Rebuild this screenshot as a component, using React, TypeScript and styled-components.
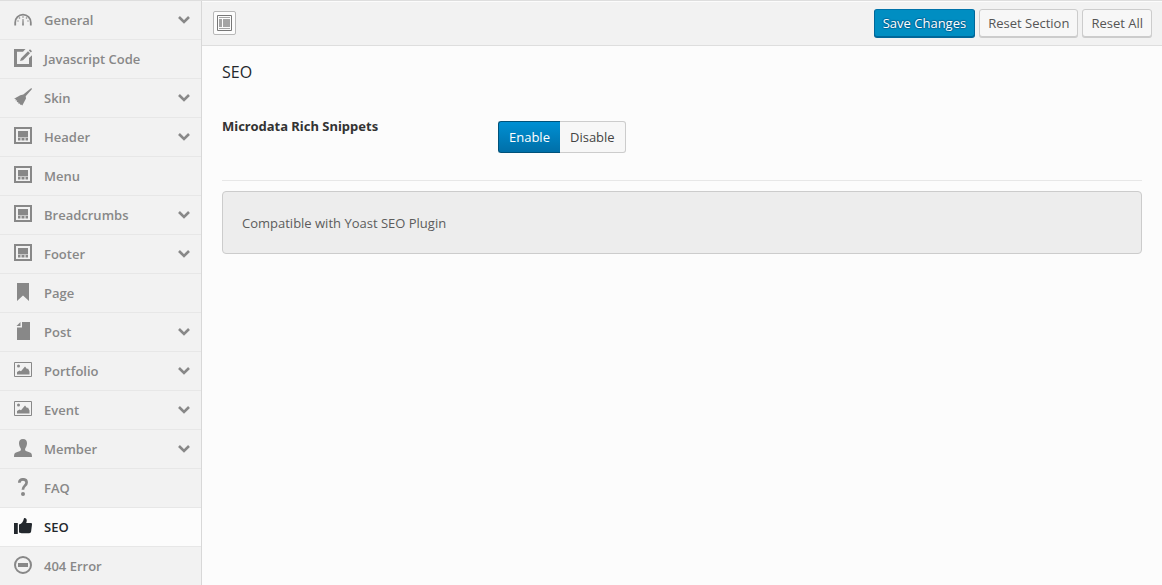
import React, { useState } from 'react';
import styled, { createGlobalStyle, css } from 'styled-components';

const GlobalStyle = createGlobalStyle`
  *, *::before, *::after { box-sizing: border-box; }
  body {
    margin: 0;
    background: #fcfcfc;
    color: #333;
    font-family: 'Open Sans', 'Noto Sans', sans-serif;
    font-size: 13px;
    line-height: 20px;
  }
  h2, h3, p, ul { margin: 0; padding: 0; }
`;

const Shell = styled.div`
  display: flex;
  min-height: 100vh;
  border-top: 1px solid #dedede;
`;

const Sidebar = styled.nav`
  flex: none;
  width: 202px;
  background: #f2f2f2;
  border-right: 1px solid #d8d8d8;
`;

const MenuList = styled.ul`
  list-style: none;
`;

const MenuItem = styled.li`
  & + & { border-top: 1px solid #e7e7e7; }
`;

const MenuLink = styled.a<{ $active?: boolean }>`
  display: flex;
  align-items: center;
  height: 38px;
  padding: 0 11px 0 14px;
  color: ${p => (p.$active ? '#23282d' : '#888')};
  background: ${p => (p.$active ? '#fcfcfc' : 'transparent')};
  font-weight: 600;
  text-decoration: none;
`;

const MenuIcon = styled.svg`
  flex: none;
  width: 18px;
  height: 18px;
  margin: 0 12px 2px 0;
  fill: currentColor;
`;

const MenuLabel = styled.span`
  flex: 1;
`;

const Chevron = styled.svg`
  flex: none;
  width: 12px;
  height: 8px;
  fill: none;
  stroke: currentColor;
  stroke-width: 2.6;
`;

const Main = styled.main`
  flex: 1;
  min-width: 0;
`;

const Toolbar = styled.header`
  display: flex;
  align-items: center;
  justify-content: space-between;
  height: 45px;
  padding: 0 10px 0 11px;
  background: #f2f2f2;
  border-bottom: 1px solid #dedede;
  box-shadow: inset 0 1px 0 #fcfcfc;
`;

const ExpandButton = styled.button`
  display: flex;
  align-items: center;
  justify-content: center;
  width: 23px;
  height: 24px;
  padding: 0;
  background: #fcfcfc;
  border: 1px solid #b8b8b8;
  border-radius: 2px;
`;

const Actions = styled.div`
  display: flex;
  gap: 4px;
`;

const ActionButton = styled.button<{ $primary?: boolean }>`
  height: 28px;
  padding: 0 8px;
  border: 1px solid #ccc;
  border-radius: 3px;
  background: #f7f7f7;
  box-shadow: 0 1px 0 #ccc;
  color: #555;
  font: inherit;
  ${p => p.$primary && css`
    border-color: #0073aa #006799 #006799;
    background: #008ec2;
    box-shadow: 0 1px 0 #006799;
    color: #fff;
    text-shadow: 0 -1px 1px #006799, 1px 0 1px #006799, 0 1px 1px #006799, -1px 0 1px #006799;
  `}
`;

const Content = styled.section`
  padding: 14px 20px;
`;

const Title = styled.h2`
  color: #23282d;
  font-size: 16px;
  font-weight: 500;
  line-height: 24px;
`;

const Field = styled.div`
  display: grid;
  grid-template-columns: 30% 1fr;
  align-items: start;
  padding: 32px 0 27px;
  border-bottom: 1px solid #e7e7e7;
`;

const FieldTitle = styled.h3`
  font-family: 'Noto Sans', 'Open Sans', sans-serif;
  font-size: 13px;
  font-weight: 700;
`;

const Switch = styled.div`
  display: flex;
  margin-top: 5px;
`;

const Option = styled.label`
  position: relative;
  height: 32px;
  padding: 0 10px;
  border: 1px solid #ccc;
  border-left: 0;
  border-radius: 0 3px 3px 0;
  background: #f7f7f7;
  color: #444;
  line-height: 30px;

  &:first-child {
    border-left: 1px solid #ccc;
    border-right: 0;
    border-radius: 3px 0 0 3px;
  }
  &:has(input:checked) {
    border-color: #00527a;
    background: linear-gradient(#0090d3, #006fa8);
    color: #fff;
  }
  input {
    position: absolute;
    inset: 0;
    margin: 0;
    opacity: 0;
  }
`;

const Notice = styled.p`
  margin-top: 10px;
  padding: 21px 19px 20px;
  border: 1px solid #ccc;
  border-radius: 4px;
  background: #ededed;
  color: #5c5c5c;
  font-weight: 500;
`;

const icons = {
  gauge: (
    <>
      <path d="M1.200 15.500V12.500A7.800 7.800 0 0 1 16.800 12.500V15.500" fill="none" stroke="currentColor" strokeWidth="1.800" />
      <path d="M8.500 9h1l.4 6.500H8.100z" />
      <circle cx="4" cy="11" r=".7" /><circle cx="5.500" cy="8" r=".8" /><circle cx="9" cy="7" r=".8" />
      <circle cx="12.500" cy="8" r=".8" /><circle cx="14" cy="11" r=".7" />
    </>
  ),
  edit: (
    <>
      <path d="M0 0h11.500L9 2.800H3v12.200h12V9L18 6.300V18H0z" />
      <path d="M7 9.200 14 2.200l2 2L9 11.200 6 12zM14.800 1.400 16 .2l2 2-1.200 1.200z" />
    </>
  ),
  broom: (
    <path d="M17.300 0 18 .9 11.700 8.300 12 10.500 8.300 17.600 7 16.400 6.500 17 5.600 15.400 4.500 15.800 4.300 14.200 2.700 14 3.200 12.500 1.200 12.300 2 11 0 10.700 6.300 7.200 9.300 6.400z" />
  ),
  layout: (
    <>
      <path d="M1 1h16v15H1z" fill="none" stroke="currentColor" strokeWidth="2" />
      <path d="M4 4h10v6H4zM4 11h2.500v2.500H4zM7.500 11h3v2.500h-3zM11.500 11H14v2.500h-2.500z" />
      <path d="M4 10h10v1H4z" opacity=".4" />
    </>
  ),
  bookmark: <path d="M3 0h12v18l-6-5.500L3 18z" />,
  file: <path d="M8 0h8v18H3V5.500h5zM6.500 0v4H2.500z" />,
  image: (
    <>
      <path d="M.5 1.500h17v14H.5z" fill="none" stroke="currentColor" />
      <circle cx="4.500" cy="5" r="1.500" />
      <path d="M3 13.500V11l2.500-1.500 1.500.7L11 5.500l2 2.500 1-.5 1.500 3v3z" />
    </>
  ),
  user: (
    <path d="M9 0c2.800 0 4.200 1.800 4 4.500-.2 2.300-.8 3.500-1.600 4.700-.6 1-.4 2.300.5 2.800L16 13.600c1.400.6 2 1.400 2 4.400H0c0-3 .6-3.800 2-4.400L6.100 12c.9-.5 1.100-1.800.5-2.800C5.800 8 5.200 6.800 5 4.500 4.800 1.800 6.200 0 9 0z" />
  ),
  question: (
    <>
      <path d="M5.300 4.800C5.400 2.500 6.800 1.300 9 1.300c2.300 0 3.600 1.200 3.600 3.100 0 3.300-3.700 3.200-3.700 7.400" fill="none" stroke="currentColor" strokeWidth="2.700" />
      <circle cx="9" cy="16" r="2" />
    </>
  ),
  thumb: (
    <path d="M0 6h3.800v11H0zM5 7.600C8 6.800 9 4.500 9.700 2.200 10.100 1 10.500 1 11.300 1.200c1.800.6 1.700 2.600.9 4.800h4.600c1 0 1.300.6 1.200 1.500l-.9 7c-.2 1.200-.8 1.700-2 1.700H7.600L5 15.500z" />
  ),
  minus: (
    <>
      <circle cx="9" cy="9" r="8" fill="none" stroke="currentColor" strokeWidth="2" />
      <path d="M4 7h10v4H4z" />
    </>
  ),
};

type Entry = { label: string; icon: keyof typeof icons; expandable?: boolean; active?: boolean };

const entries: Entry[] = [
  { label: 'General', icon: 'gauge', expandable: true },
  { label: 'Javascript Code', icon: 'edit' },
  { label: 'Skin', icon: 'broom', expandable: true },
  { label: 'Header', icon: 'layout', expandable: true },
  { label: 'Menu', icon: 'layout' },
  { label: 'Breadcrumbs', icon: 'layout', expandable: true },
  { label: 'Footer', icon: 'layout', expandable: true },
  { label: 'Page', icon: 'bookmark' },
  { label: 'Post', icon: 'file', expandable: true },
  { label: 'Portfolio', icon: 'image', expandable: true },
  { label: 'Event', icon: 'image', expandable: true },
  { label: 'Member', icon: 'user', expandable: true },
  { label: 'FAQ', icon: 'question' },
  { label: 'SEO', icon: 'thumb', active: true },
  { label: '404 Error', icon: 'minus' },
];

export default function App() {
  const [snippets, setSnippets] = useState('Enable');
  return (
    <>
      <GlobalStyle />
      <Shell>
        <Sidebar>
          <MenuList>
            {entries.map(e => (
              <MenuItem key={e.label}>
                <MenuLink href="#" $active={e.active}>
                  <MenuIcon viewBox="0 0 18 18" aria-hidden="true">{icons[e.icon]}</MenuIcon>
                  <MenuLabel>{e.label}</MenuLabel>
                  {e.expandable && (
                    <Chevron viewBox="0 0 12 8" aria-hidden="true">
                      <path d="M1 1l5 5 5-5" />
                    </Chevron>
                  )}
                </MenuLink>
              </MenuItem>
            ))}
          </MenuList>
        </Sidebar>
        <Main>
          <Toolbar>
            <ExpandButton type="button" aria-label="Expand all sections">
              <svg width="15" height="16" viewBox="0 0 15 16" aria-hidden="true">
                <path d="M.5.5h14v15H.5z" fill="#fcfcfc" stroke="#777" />
                <path d="M2 2h11v1H2zM2 4h3v8H2zM6 4h7v8H6zM2 13h11v1H2z" fill="#a5a5a5" />
              </svg>
            </ExpandButton>
            <Actions>
              <ActionButton type="button" $primary>Save Changes</ActionButton>
              <ActionButton type="button">Reset Section</ActionButton>
              <ActionButton type="button">Reset All</ActionButton>
            </Actions>
          </Toolbar>
          <Content>
            <Title>SEO</Title>
            <Field>
              <FieldTitle id="snippets-title">Microdata Rich Snippets</FieldTitle>
              <Switch role="radiogroup" aria-labelledby="snippets-title">
                {['Enable', 'Disable'].map(o => (
                  <Option key={o}>
                    <input type="radio" name="snippets" checked={snippets === o} onChange={() => setSnippets(o)} />
                    {o}
                  </Option>
                ))}
              </Switch>
            </Field>
            <Notice>Compatible with Yoast SEO Plugin</Notice>
          </Content>
        </Main>
      </Shell>
    </>
  );
}
